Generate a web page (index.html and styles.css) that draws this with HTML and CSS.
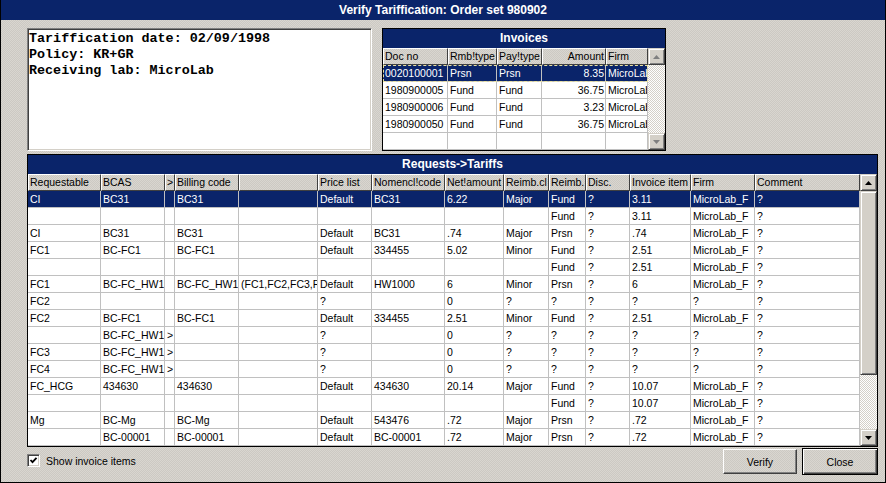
FILE: index.html
```html
<!DOCTYPE html>
<html>
<head>
<meta charset="utf-8">
<link rel="stylesheet" href="styles.css">
</head>
<body>
<div class="win">
  <div class="titlebar">Verify Tariffication: Order set 980902</div>
  <div class="main">
    <div class="top">
      <div class="info">
        <div>Tariffication date: 02/09/1998</div>
        <div>Policy: KR+GR</div>
        <div>Receiving lab: MicroLab</div>
      </div>
      <div class="panel inv">
        <div class="ptitle">Invoices</div>
        <div class="grid">
          <table class="tinv">
            <colgroup><col class="i1"><col class="i2"><col class="i3"><col class="i4"><col class="i5"></colgroup>
            <tr><th>Doc no</th><th>Rmb!type</th><th>Pay!type</th><th class="r">Amount</th><th>Firm</th></tr>
            <tr class="sel focus"><td>0020100001</td><td>Prsn</td><td>Prsn</td><td class="r">8.35</td><td>MicroLab</td></tr>
            <tr><td>1980900005</td><td>Fund</td><td>Fund</td><td class="r">36.75</td><td>MicroLab</td></tr>
            <tr><td>1980900006</td><td>Fund</td><td>Fund</td><td class="r">3.23</td><td>MicroLab</td></tr>
            <tr><td>1980900050</td><td>Fund</td><td>Fund</td><td class="r">36.75</td><td>MicroLab</td></tr>
            <tr><td></td><td></td><td></td><td></td><td></td></tr>
          </table>
          <div class="vs">
            <div class="arr"><svg width="9" height="6" viewBox="0 0 9 6"><polygon points="4.5,1 8,5 1,5" fill="#808080"/></svg></div>
            <div class="track"></div>
            <div class="arr"><svg width="9" height="6" viewBox="0 0 9 6"><polygon points="1,1 8,1 4.5,5" fill="#808080"/></svg></div>
          </div>
        </div>
      </div>
    </div>
    <div class="panel req">
      <div class="ptitle">Requests-&gt;Tariffs</div>
      <div class="grid">
        <table class="treq">
          <colgroup><col class="r1"><col class="r2"><col class="r3"><col class="r4"><col class="r5"><col class="r6"><col class="r7"><col class="r8"><col class="r9"><col class="r10"><col class="r11"><col class="r12"><col class="r13"><col class="r14"></colgroup>
          <tr><th>Requestable</th><th>BCAS</th><th>&gt;</th><th>Billing code</th><th></th><th>Price list</th><th>Nomencl!code</th><th>Net!amount</th><th>Reimb.cl</th><th>Reimb.</th><th>Disc.</th><th>Invoice item</th><th>Firm</th><th>Comment</th></tr>
          <tr class="sel"><td>CI</td><td>BC31</td><td></td><td>BC31</td><td></td><td>Default</td><td>BC31</td><td>6.22</td><td>Major</td><td>Fund</td><td>?</td><td>3.11</td><td>MicroLab_F</td><td>?</td></tr>
          <tr><td></td><td></td><td></td><td></td><td></td><td></td><td></td><td></td><td></td><td>Fund</td><td>?</td><td>3.11</td><td>MicroLab_F</td><td>?</td></tr>
          <tr><td>CI</td><td>BC31</td><td></td><td>BC31</td><td></td><td>Default</td><td>BC31</td><td>.74</td><td>Major</td><td>Prsn</td><td>?</td><td>.74</td><td>MicroLab_F</td><td>?</td></tr>
          <tr><td>FC1</td><td>BC-FC1</td><td></td><td>BC-FC1</td><td></td><td>Default</td><td>334455</td><td>5.02</td><td>Minor</td><td>Fund</td><td>?</td><td>2.51</td><td>MicroLab_F</td><td>?</td></tr>
          <tr><td></td><td></td><td></td><td></td><td></td><td></td><td></td><td></td><td></td><td>Fund</td><td>?</td><td>2.51</td><td>MicroLab_F</td><td>?</td></tr>
          <tr><td>FC1</td><td>BC-FC_HW1</td><td></td><td>BC-FC_HW1</td><td>(FC1,FC2,FC3,F</td><td>Default</td><td>HW1000</td><td>6</td><td>Minor</td><td>Prsn</td><td>?</td><td>6</td><td>MicroLab_F</td><td>?</td></tr>
          <tr><td>FC2</td><td></td><td></td><td></td><td></td><td>?</td><td></td><td>0</td><td>?</td><td>?</td><td>?</td><td>?</td><td>?</td><td>?</td></tr>
          <tr><td>FC2</td><td>BC-FC1</td><td></td><td>BC-FC1</td><td></td><td>Default</td><td>334455</td><td>2.51</td><td>Minor</td><td>Fund</td><td>?</td><td>2.51</td><td>MicroLab_F</td><td>?</td></tr>
          <tr><td></td><td>BC-FC_HW1</td><td>&gt;</td><td></td><td></td><td>?</td><td></td><td>0</td><td>?</td><td>?</td><td>?</td><td>?</td><td>?</td><td>?</td></tr>
          <tr><td>FC3</td><td>BC-FC_HW1</td><td>&gt;</td><td></td><td></td><td>?</td><td></td><td>0</td><td>?</td><td>?</td><td>?</td><td>?</td><td>?</td><td>?</td></tr>
          <tr><td>FC4</td><td>BC-FC_HW1</td><td>&gt;</td><td></td><td></td><td>?</td><td></td><td>0</td><td>?</td><td>?</td><td>?</td><td>?</td><td>?</td><td>?</td></tr>
          <tr><td>FC_HCG</td><td>434630</td><td></td><td>434630</td><td></td><td>Default</td><td>434630</td><td>20.14</td><td>Major</td><td>Fund</td><td>?</td><td>10.07</td><td>MicroLab_F</td><td>?</td></tr>
          <tr><td></td><td></td><td></td><td></td><td></td><td></td><td></td><td></td><td></td><td>Fund</td><td>?</td><td>10.07</td><td>MicroLab_F</td><td>?</td></tr>
          <tr><td>Mg</td><td>BC-Mg</td><td></td><td>BC-Mg</td><td></td><td>Default</td><td>543476</td><td>.72</td><td>Major</td><td>Prsn</td><td>?</td><td>.72</td><td>MicroLab_F</td><td>?</td></tr>
          <tr><td></td><td>BC-00001</td><td></td><td>BC-00001</td><td></td><td>Default</td><td>BC-00001</td><td>.72</td><td>Major</td><td>Prsn</td><td>?</td><td>.72</td><td>MicroLab_F</td><td>?</td></tr>
        </table>
        <div class="vs">
          <div class="arr"><svg width="9" height="6" viewBox="0 0 9 6"><polygon points="4.5,1 8,5 1,5" fill="#000"/></svg></div>
          <div class="thumb"></div>
          <div class="track"></div>
          <div class="arr"><svg width="9" height="6" viewBox="0 0 9 6"><polygon points="1,1 8,1 4.5,5" fill="#000"/></svg></div>
        </div>
      </div>
    </div>
    <div class="bottom">
      <label class="chk">
        <span class="box"><svg width="9" height="9" viewBox="0 0 9 9"><polyline points="1.5,4 3.5,6.2 7.5,1.8" fill="none" stroke="#000" stroke-width="1.8"/></svg></span>
        <span>Show invoice items</span>
      </label>
      <div class="btns">
        <div class="btn">Verify</div>
        <div class="btn def">Close</div>
      </div>
    </div>
  </div>
</div>
</body>
</html>
```
FILE: styles.css
```css
* { box-sizing: border-box; }
html, body { margin: 0; padding: 0; }
body {
  width: 886px;
  height: 483px;
  overflow: hidden;
  font-family: "Liberation Sans", Arial, sans-serif;
  font-size: 10.5px;
  color: #000;
}
.win {
  width: 886px;
  height: 483px;
  border: 1px solid #000;
  border-top: 0;
  background-color: #d4d0c8;
  background-image: repeating-conic-gradient(#d9d6d0 0 25%, #ccc9c3 0 50%);
  background-size: 2px 2px;
}
.titlebar {
  height: 20px;
  background: #0a246a;
  color: #fff;
  font-weight: bold;
  font-size: 12px;
  line-height: 21px;
  text-align: center;
}
.main { padding: 8px 0 0 26px; }
.top { display: flex; gap: 10px; height: 123px; }
.info {
  width: 345px;
  height: 123px;
  background: #fff;
  border: 1px solid;
  border-color: #808080 #fff #fff #808080;
  box-shadow: inset 1px 1px 0 #404040, inset -1px -1px 0 #d4d0c8;
  padding: 2px 1px;
  font-family: "Liberation Mono", "Courier New", monospace;
  font-weight: bold;
  font-size: 13.4px;
  line-height: 16px;
  white-space: nowrap;
}
.panel { border: 1px solid #000; background: #fff; }
.inv { width: 284px; height: 123px; }
.req { width: 851px; height: 293px; margin-top: 3px; }
.ptitle {
  height: 19px;
  background: #0a246a;
  color: #fff;
  font-weight: bold;
  font-size: 12px;
  line-height: 19px;
  text-align: center;
}
.grid { display: flex; }
table { border-collapse: separate; border-spacing: 0; table-layout: fixed; }
.tinv { width: 265px; }
.treq { width: 832px; }
.i1 { width: 65px; } .i2 { width: 49px; } .i3 { width: 45px; } .i4 { width: 64px; } .i5 { width: 42px; }
.r1 { width: 73px; } .r2 { width: 64px; } .r3 { width: 10px; } .r4 { width: 64px; } .r5 { width: 79px; }
.r6 { width: 54px; } .r7 { width: 73px; } .r8 { width: 59px; } .r9 { width: 45px; } .r10 { width: 37px; }
.r11 { width: 44px; } .r12 { width: 61px; } .r13 { width: 64px; } .r14 { width: 105px; }
td, th {
  height: 17px;
  padding: 0 1px 0 2px;
  border-right: 1px solid #c0c0c0;
  border-bottom: 1px solid #c0c0c0;
  white-space: nowrap;
  overflow: hidden;
  font-weight: normal;
  text-align: left;
  line-height: 15px;
  font-size: 10.5px;
}
th {
  padding: 0 1px;
  background-color: #d4d0c8;
  background-image: repeating-conic-gradient(#d9d6d0 0 25%, #ccc9c3 0 50%);
  background-size: 2px 2px;
  border: 1px solid;
  border-color: #fff #404040 #404040 #fff;
}
.r { text-align: right; }
tr.sel td { background: #0a246a; color: #fff; }
tr.focus { outline: 1px dashed #e8e0a0; outline-offset: -1px; }
.vs {
  width: 17px;
  display: flex;
  flex-direction: column;
  background-image: repeating-conic-gradient(#ffffff 0 25%, #d4d0c8 0 50%);
  background-size: 2px 2px;
}
.arr, .thumb {
  height: 17px;
  flex: none;
  background: #d4d0c8;
  border: 1px solid;
  border-color: #d4d0c8 #404040 #404040 #d4d0c8;
  box-shadow: inset 1px 1px 0 #fff, inset -1px -1px 0 #808080;
  display: flex;
  align-items: center;
  justify-content: center;
}
.thumb { height: 184px; }
.track { flex: 1; }
.bottom {
  display: flex;
  align-items: flex-start;
  width: 851px;
  padding-top: 1px;
}
.chk {
  display: flex;
  align-items: center;
  gap: 6px;
  margin-top: 6px;
  font-size: 10.5px;
}
.box {
  width: 13px;
  height: 13px;
  background: #fff;
  border: 1px solid;
  border-color: #808080 #fff #fff #808080;
  box-shadow: inset 1px 1px 0 #404040, inset -1px -1px 0 #d4d0c8;
  display: flex;
  align-items: center;
  justify-content: center;
}
.btns { margin-left: auto; display: flex; gap: 5px; }
.btn {
  width: 74px;
  height: 25px;
  margin-top: 1px;
  background-color: #d4d0c8;
  background-image: repeating-conic-gradient(#d9d6d0 0 25%, #ccc9c3 0 50%);
  background-size: 2px 2px;
  border: 1px solid;
  border-color: #fff #404040 #404040 #fff;
  box-shadow: inset -1px -1px 0 #808080;
  display: flex;
  align-items: center;
  justify-content: center;
  font-size: 10.5px;
}
.btn.def {
  width: 76px;
  height: 27px;
  margin-top: 0;
  border: 1px solid #000;
  box-shadow: inset 1px 1px 0 #fff, inset -1px -1px 0 #404040, inset -2px -2px 0 #808080;
}
```
